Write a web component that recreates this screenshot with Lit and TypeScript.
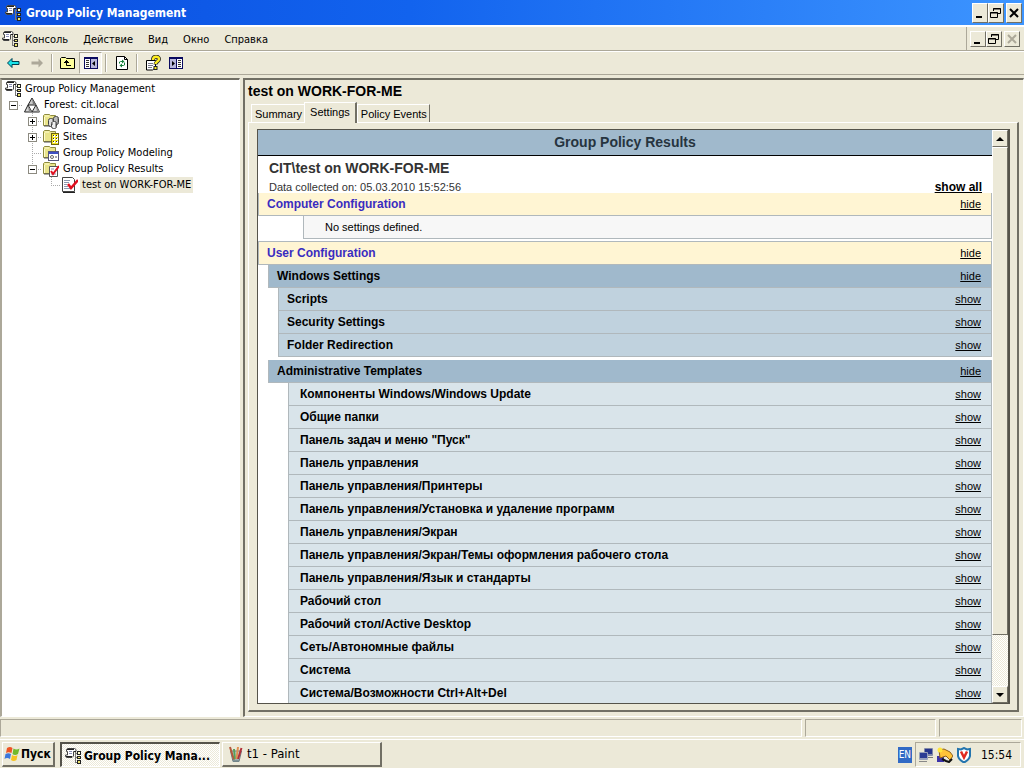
import { LitElement, html, svg, css, TemplateResult, SVGTemplateResult } from "lit";
import { customElement, state } from "lit/decorators.js";

const art: Record<string, SVGTemplateResult> = {
  console: svg`
    <path d="M2.500 .500h7l1.500 1v2H8.500v4.500l-1.500 1.500H1.500l-1-1V7h2V3.500h-1v-2z" fill="#fff" stroke="#444"/>
    <path d="M2 1.500h7M9 3.500h2M1 8.500h6" stroke="#222"/>
    <path d="M4 3.500h3M4 5.500h3" stroke="#8a90b8"/>
    <path d="M10.500 4v10.500M10 5.500h3M10 9.500h3M10 14.500h3" stroke="#777" fill="none"/>
    <rect x="12.500" y="3.500" width="3" height="3" fill="#ffffd0" stroke="#222"/>
    <rect x="12.500" y="8.500" width="3" height="2" fill="#f0e870" stroke="#222"/>
    <rect x="12.500" y="12.500" width="3" height="3" fill="#f0e870" stroke="#222"/>`,
  forest: svg`
    <path d="M8 1l4 7H4z" fill="#c8c8c8" stroke="#222"/><path d="M8 1l1 7h3z" fill="#777"/>
    <path d="M4 8l4 7H.500z" fill="#d4d4d4" stroke="#222"/><path d="M4 9l1 6h3z" fill="#888"/>
    <path d="M12 8l3.500 7H8z" fill="#d4d4d4" stroke="#222"/><path d="M12 9l1 6h3z" fill="#888"/>`,
  folder: svg`
    <path d="M.500 12.500v-10l1-1h5l1 1h5v10z" fill="#e9e48a" stroke="#8d8a3e"/>
    <path d="M2 3h4M1.500 4v8" stroke="#fffcd0"/><path d="M1 13h12" stroke="#555"/>`,
  domains: svg`
    <rect x="5.500" y="5.500" width="5" height="8" rx="2" fill="#ddd" stroke="#444"/>
    <rect x="10.500" y="3.500" width="5" height="8" rx="2" fill="#bbb" stroke="#444"/>
    <rect x="8.500" y="8.500" width="5" height="7" rx="2" fill="#eee" stroke="#444"/>
    <path d="M9.500 7v5M14.500 5v5M12.500 10v5" stroke="#999"/>`,
  sites: svg`
    <rect x="8.500" y="4.500" width="7" height="11" fill="#f2e41c" stroke="#6b6410"/>
    <path d="M10 7h2M13 7h2M10 10h2M13 10h2M10 13h2M13 13h2" stroke="#fff" stroke-width="2"/>
    <path d="M10.500 6v8M13.500 6v8" stroke="#333" stroke-dasharray="1 2"/>`,
  modeling: svg`
    <rect x="5.500" y="6.500" width="10" height="9" fill="#fff" stroke="#55557a"/>
    <rect x="6" y="7" width="9" height="2" fill="#3e50c4"/>
    <circle cx="9" cy="12" r="1.500" fill="none" stroke="#666"/><path d="M12 11h2v2h-2z" fill="#aaa"/>`,
  results: svg`
    <path d="M6.500 5.500h8v10h-8z" fill="#fff" stroke="#555"/>
    <path d="M8 8h3M8 13h5" stroke="#88a"/><path d="M8 10l2 3 6-8" fill="none" stroke="#e01020" stroke-width="2"/>`,
  report: svg`
    <path d="M.500 .500h10l2 2v12h-12z" fill="#fff" stroke="#444"/><path d="M1 15.500h12" stroke="#222"/>
    <path d="M2 3.500h6M2 5.500h5M2 7.500h3M2 9.500h4M2 11.500h7" stroke="#8c98b0"/>
    <path d="M6 7l3 4 7-8" fill="none" stroke="#e01020" stroke-width="2.500"/>`,
  back: svg`<path d="M1.500 8L6 3.500V6.500h7v3H6v3z" fill="#19e4ea" stroke="#003f50"/>`,
  forward: svg`<path d="M14 8L9.500 3.500V6.500h-7v3h7v3z" fill="#aca899"/>`,
  up: svg`
    <path d="M.500 13.500v-10l1-1h4l1 1h8v10z" fill="#ffff9c" stroke="#000"/>
    <path d="M4 7.500h5M5 6.500h3M6.500 5v5.500H11" fill="none" stroke="#000"/>`,
  treePane: svg`
    <rect x="1.500" y="2.500" width="13" height="11" fill="#fff" stroke="#0a0a60"/><path d="M1 3h14" stroke="#0a0a60" stroke-width="2"/>
    <rect x="8" y="4" width="6" height="9" fill="#b8b8da"/><path d="M7.500 4v9" stroke="#0a0a60"/>
    <path d="M3 5.500h3M3 7.500h3M3 9.500h3M3 11.500h3" stroke="#333"/><path d="M12 6v5L9 8.500z" fill="#000"/>`,
  actionPane: svg`
    <rect x="1.500" y="2.500" width="13" height="11" fill="#fff" stroke="#0a0a60"/><path d="M1 3h14" stroke="#0a0a60" stroke-width="2"/>
    <rect x="2" y="4" width="6" height="9" fill="#b8b8da"/><path d="M8.500 4v9" stroke="#0a0a60"/>
    <path d="M10 5.500h3M10 7.500h3M10 9.500h3M10 11.500h3" stroke="#333"/><path d="M4 6v5l3-2.500z" fill="#000"/>`,
  refresh: svg`
    <path d="M2.500 1.500h8l3 3v10h-11z" fill="#fff" stroke="#000"/><path d="M10.500 1.500v3h3" fill="none" stroke="#000"/>
    <path d="M5.500 8.500V7l1-.500h2M10.500 7.500V10l-1 .500H8" fill="none" stroke="#15803a"/>
    <path d="M8 4.500l2.500 2-2.500 2zM8 8.500l-2.500 2 2.500 2z" fill="#15803a"/>`,
  help: svg`
    <path d="M1.500 5.500h9v7l-3 2.500h-6z" fill="#fff" stroke="#000"/><path d="M3 8.500h5M3 10.500h5M3 12.500h4" stroke="#778"/>
    <path d="M8 5c0-4.500 6-4 6-1 0 2.500-3.500 2.500-3.500 5.500" fill="none" stroke="#222" stroke-width="4"/>
    <path d="M8 5c0-4.500 6-4 6-1 0 2.500-3.500 2.500-3.500 5" fill="none" stroke="#ffee20" stroke-width="2.500"/>
    <rect x="9" y="11.500" width="3" height="3" fill="#ffee20" stroke="#222"/>`,
  flag: svg`
    <path d="M3 2q3-2 5.500 0L7.500 7q-3-1.500-5.500 0z" fill="#ee5525"/><path d="M9.500 2.500q3 2 6 0L14 8q-3 2-5.500 0z" fill="#72b92b"/>
    <path d="M1.500 8q3-1.500 5.500 0L6 13q-3-2-5.500 0z" fill="#3c78dc"/><path d="M8 9q3 2 5.500 0l-1 5q-3 2-5.500 0z" fill="#f7c320"/>`,
  paint: svg`
    <path d="M2.500 5h11l-2.500 10.500H5z" fill="#c2d0d2" stroke="#68797f"/>
    <path d="M6 14L2 1" stroke="#b4583a" stroke-width="2"/><path d="M7 13L6 3" stroke="#58a058" stroke-width="2"/>
    <path d="M8.500 13l1.500-12" stroke="#e09050" stroke-width="2"/><path d="M10 13l3.500-11" stroke="#b02f38" stroke-width="2"/>
    <path d="M5 14.500h6" stroke="#7f9296" stroke-width="2"/>`,
  network: svg`
    <rect x="6" y="1" width="9" height="8" rx="1" fill="#8088a8"/><rect x="7" y="2" width="7" height="5" fill="#25348c"/>
    <path d="M9 10h6v1H9z" fill="#777"/>
    <rect x="1" y="5" width="9" height="8" rx="1" fill="#98a0bc"/><rect x="2" y="6" width="7" height="5" fill="#2c3c94"/><path d="M1 14h8v1H1z" fill="#888"/>`,
  agent: svg`
    <path d="M0 9h7v6H0z" fill="#3b32a8"/><path d="M2 3l5-1 6 3 3 4-3 4-4-4-6 2z" fill="#ffc338" stroke="#8e5f18"/>
    <path d="M5 12l4 2 3 1 3-3" fill="none" stroke="#111" stroke-width="2"/><circle cx="3" cy="3" r="2.500" fill="#ffe63c"/>`,
  shield: svg`
    <path d="M2 2l3 .500L8 1l3 1.500L14 2v7q-1 4-6 6.500Q3 13 2 9z" fill="#fff" stroke="#2475ae" stroke-width="2"/>
    <path d="M5 4.500l3 6 3-6" fill="none" stroke="#e02a20" stroke-width="2.500"/>`,
  minimize: svg`<path d="M4 11h6v2H4z"/>`,
  restore: svg`<path d="M5.500 6V3.500h7v5H10M5 4h8" fill="none" stroke="currentColor"/><path d="M2.500 7.500h7v5h-7zM2 8h8" fill="none" stroke="currentColor"/>`,
  close: svg`<path d="M4 4l8 8M12 4l-8 8" stroke="currentColor" stroke-width="2" fill="none"/>`,
  arrowUp: svg`<path d="M4 10h8L8 6z"/>`,
  arrowDown: svg`<path d="M4 6h8l-4 4z"/>`,
};

const icon = (...names: string[]): TemplateResult =>
  html`<svg class="icon" viewBox="0 0 16 16" aria-hidden="true">${names.map((n) => art[n])}</svg>`;

const menus = ["Консоль", "Действие", "Вид", "Окно", "Справка"];

interface Node { cells: string[]; icons: string[]; label: string; selected?: boolean }

const tree: Node[] = [
  { cells: [], icons: ["console"], label: "Group Policy Management" },
  { cells: ["minus root"], icons: ["forest"], label: "Forest: cit.local" },
  { cells: ["", "plus line"], icons: ["folder", "domains"], label: "Domains" },
  { cells: ["", "plus line"], icons: ["folder", "sites"], label: "Sites" },
  { cells: ["", "line"], icons: ["folder", "modeling"], label: "Group Policy Modeling" },
  { cells: ["", "minus end"], icons: ["folder", "results"], label: "Group Policy Results" },
  { cells: ["", "", "end"], icons: ["report"], label: "test on WORK-FOR-ME", selected: true },
];

const windowsSettings = ["Scripts", "Security Settings", "Folder Redirection"];

const templates = [
  "Компоненты Windows/Windows Update",
  "Общие папки",
  'Панель задач и меню "Пуск"',
  "Панель управления",
  "Панель управления/Принтеры",
  "Панель управления/Установка и удаление программ",
  "Панель управления/Экран",
  "Панель управления/Экран/Темы оформления рабочего стола",
  "Панель управления/Язык и стандарты",
  "Рабочий стол",
  "Рабочий стол/Active Desktop",
  "Сеть/Автономные файлы",
  "Система",
  "Система/Возможности Ctrl+Alt+Del",
];

@customElement("app-root")
export class AppRoot extends LitElement {
  @state() private tab = "Settings";

  static styles = css`
    * { box-sizing: border-box; }
    :host {
      display: flex; flex-direction: column; height: 100vh; overflow: hidden;
      background: #ece9d8; color: #000;
      font: 11px/16px "DejaVu Sans Condensed", "Noto Sans", sans-serif;
      white-space: nowrap;
    }
    button { font: inherit; color: inherit; background: none; border: 0; padding: 0; margin: 0; white-space: nowrap; }
    h1, h2, h3, h4, ul, p { margin: 0; padding: 0; font: inherit; list-style: none; }
    a { color: #000; }
    .icon { width: 16px; height: 16px; flex: none; display: block; fill: currentColor; }

    .titlebar { display: flex; align-items: center; height: 25px; padding: 0 2px 0 5px; gap: 5px;
      background: linear-gradient(90deg, #0a4fe0, #1263ee 40%, #3d95ff); color: #fff; }
    .titlebar h1 { flex: 1; font-weight: bold; font-size: 12px; }
    .winbtns { display: flex; color: #000; }
    .winbtn { width: 16px; height: 20px; display: flex; align-items: center; justify-content: center;
      background: #ece9d8; border: 1px solid; border-color: #fff #716f64 #716f64 #fff; overflow: hidden; }
    .winbtn:last-child { margin-left: 2px; }
    .small .winbtn { height: 16px; }
    .small .winbtn:last-child { color: #aca899; }

    .menubar { display: flex; align-items: center; height: 26px; padding-left: 2px;
      border-top: 2px solid #fff; border-bottom: 1px solid #aca899; }
    .menus { display: flex; flex: 1; gap: 15px; padding: 2px 0 0 7px; }
    .small { align-items: center; height: 23px; padding: 0 4px 0 3px; border-left: 1px solid #aca899; }
    .toolbar { display: flex; align-items: center; height: 24px; padding-left: 2px;
      border-top: 1px solid #fff; border-bottom: 1px solid #aca899; }
    .tool { display: flex; align-items: center; justify-content: center; width: 23px; height: 22px; }
    .pressed { background: #f6f4ec; border: 1px solid; border-color: #aca899 #fff #fff #aca899; }
    .sep { width: 2px; height: 18px; margin: 0 3px; border-left: 1px solid #aca899; border-right: 1px solid #fff; }

    .body { flex: 1; display: flex; gap: 3px; min-height: 0; padding-top: 3px; }
    .tree { width: 240px; flex: none; background: #fff; padding: 1px 0 0 3px;
      border: 1px solid; border-width: 2px 1px 1px 2px; border-color: #716f64 #fff #fff #aca899; }
    .node { display: flex; height: 16px; }
    .node .icon { margin-right: 2px; }
    .label { padding: 0 2px; line-height: 16px; }
    .picked { background: #ece9d8; }
    .cell { width: 19px; height: 16px; flex: none; display: flex; align-items: center; padding-left: 4px;
      background-repeat: no-repeat; }
    .line { background-image: repeating-linear-gradient(#aaa 0 1px, transparent 1px 2px), repeating-linear-gradient(90deg, #aaa 0 1px, transparent 1px 2px);
      background-size: 1px 16px, 10px 1px; background-position: 8px 0, 8px 8px; }
    .end { background-image: repeating-linear-gradient(#aaa 0 1px, transparent 1px 2px), repeating-linear-gradient(90deg, #aaa 0 1px, transparent 1px 2px);
      background-size: 1px 8px, 10px 1px; background-position: 8px 0, 8px 8px; }
    .root { background-image: repeating-linear-gradient(90deg, #aaa 0 1px, transparent 1px 2px);
      background-size: 10px 1px; background-position: 8px 8px; }
    .box { width: 9px; height: 9px; border: 1px solid #8c8a80;
      background: linear-gradient(#000, #000) center / 5px 1px no-repeat #fff; }
    .plus .box { background: linear-gradient(#000, #000) center / 5px 1px no-repeat, linear-gradient(#000, #000) center / 1px 5px no-repeat, #fff; }

    .detail { flex: 1; min-width: 0; display: flex; flex-direction: column; padding: 1px 4px 4px 3px;
      border: solid; border-width: 2px 1px 1px 2px; border-color: #716f64 #fff #fff #716f64;
      font-family: "Liberation Sans", sans-serif; }
    .detail h2 { font-size: 14px; font-weight: bold; line-height: 20px; padding-bottom: 1px; }
    .tabs { display: flex; align-items: flex-end; height: 20px; padding-left: 3px; }
    .tab { height: 18px; padding: 0 2px 0 3px; border: 1px solid; border-color: #fff #716f64 transparent #fff; border-bottom: 0; }
    .tab:first-child { border-right: 0; }
    .current { height: 21px; margin-bottom: -1px; padding: 0 5px 3px; background: #ece9d8; border-right-width: 2px; z-index: 1; }
    .page { flex: 1; min-height: 0; display: flex; padding: 6px 7px 6px 8px; border: 1px solid; border-width: 1px 2px 2px 1px;
      border-color: #fff #716f64 #716f64 #fff; }
    .view { flex: 1; min-width: 0; display: flex; border: 1px solid #55534a; border-right-width: 2px; }
    .report { flex: 1; min-width: 0; overflow: hidden; background: #fff; }
    .banner { height: 26px; line-height: 25px; text-align: center; font-size: 14px; font-weight: bold; color: #26343f;
      background: #a0b9cc; border-bottom: 1px solid #000; }
    .summary { display: grid; grid-template-columns: 1fr auto; padding: 4px 10px 0 11px; height: 37px; color: #333; }
    .summary h3 { font-size: 14px; font-weight: bold; line-height: 17px; grid-column: 1 / 3; }
    .summary p { line-height: 20px; }
    .summary a { font-weight: bold; font-size: 12px; line-height: 20px; }
    .row { display: flex; justify-content: space-between; align-items: center; height: 23px; padding: 0 10px 0 8px;
      border: 1px solid #b0b8bc; border-top: 0; }
    .row h4 { font-size: 12px; font-weight: bold; }
    .config { background: #fff5d3; color: #3a2cc0; }
    .empty { margin: 0 0 2px 45px; padding-left: 21px; background: #f7f7f7; }
    .user { height: 24px; border-top: 1px solid #b0b8bc; }
    .section { margin-left: 10px; background: #a0b9cc; }
    .sub { margin-left: 20px; background: #c0d2de; }
    .subs { padding-bottom: 3px; }
    .item { margin-left: 30px; padding-left: 11px; background: #d9e4ea; }

    .scroll { width: 16px; flex: none; display: flex; flex-direction: column;
      background: repeating-conic-gradient(#fff 0 25%, #ece9d8 0 50%) 0 0 / 2px 2px; }
    .scroll button, .thumb { background: #ece9d8; border: 1px solid; border-color: #fff #716f64 #716f64 #fff; overflow: hidden; }
    .scroll button { height: 17px; display: flex; align-items: center; justify-content: center; }
    .track { flex: 1; }
    .thumb { height: 90.5%; }

    .status { display: flex; gap: 3px; height: 22px; padding: 2px 2px 2px 0; }
    .status div { border: 1px solid; border-color: #aca899 #fff #fff #aca899; width: 131px; }
    .status .grow { flex: 1; }
    .status .last { width: 83px; }
    .taskbar { display: flex; height: 29px; padding: 2px 3px 1px 2px; border-top: 1px solid #fff; font-size: 12px; }
    .start, .task { display: flex; align-items: center; border: 1px solid; border-width: 1px 2px 2px 1px;
      border-color: #fff #716f64 #716f64 #fff; }
    .start { width: 53px; font-weight: bold; gap: 1px; padding-left: 1px; margin-right: 5px; }
    .task { width: 160px; gap: 3px; padding-left: 5px; margin-right: 2px; font-size: 13px; }
    .active { font-size: 12px; font-weight: bold; padding: 1px 3px 0 3px; border-width: 2px 1px 1px 2px; border-color: #55534a #fff #fff #55534a;
      background: repeating-conic-gradient(#fff 0 25%, #ece9d8 0 50%) 0 0 / 2px 2px; }
    .lang { margin: auto 3px auto auto; width: 14px; height: 16px; text-align: center; background: #316ac5; color: #fff; font-size: 10px; }
    .tray { display: flex; align-items: center; gap: 3px; padding: 0 8px 0 2px;
      border: 1px solid; border-color: #aca899 #fff #fff #aca899; }
    .tray time { margin-left: 6px; }
  `;

  private link(text: string) {
    return html`<a href="#">${text}</a>`;
  }

  private row(kind: string, text: string, action: string) {
    return html`<div class="row ${kind}"><h4>${text}</h4>${this.link(action)}</div>`;
  }

  private windowButtons(kind: string) {
    return html`<div class="winbtns ${kind}">
      ${[["minimize", "Свернуть"], ["restore", "Восстановить"], ["close", "Закрыть"]].map(
        ([name, label]) => html`<button class="winbtn" aria-label=${label}>${icon(name)}</button>`
      )}
    </div>`;
  }

  private tool(name: string, label: string, pressed = false) {
    return html`<button class="tool ${pressed ? "pressed" : ""}" aria-label=${label}>${icon(name)}</button>`;
  }

  render() {
    return html`
      <header class="titlebar">${icon("console")}<h1>Group Policy Management</h1>${this.windowButtons("")}</header>
      <nav class="menubar">
        ${icon("console")}
        <div class="menus">${menus.map((m) => html`<button>${m}</button>`)}</div>
        ${this.windowButtons("small")}
      </nav>
      <div class="toolbar">
        ${this.tool("back", "Назад")}${this.tool("forward", "Вперед")}
        <span class="sep"></span>
        ${this.tool("up", "Вверх")}${this.tool("treePane", "Дерево консоли", true)}
        <span class="sep"></span>
        ${this.tool("refresh", "Обновить")}
        <span class="sep"></span>
        ${this.tool("help", "Справка")}${this.tool("actionPane", "Панель действий")}
      </div>

      <main class="body">
        <ul class="tree">
          ${tree.map((n) => html`<li class="node">
            ${n.cells.map((c) => html`<span class="cell ${c}">${/plus|minus/.test(c) ? html`<span class="box"></span>` : ""}</span>`)}
            ${icon(...n.icons)}<span class="label ${n.selected ? "picked" : ""}">${n.label}</span>
          </li>`)}
        </ul>

        <section class="detail">
          <h2>test on WORK-FOR-ME</h2>
          <div class="tabs" role="tablist">
            ${["Summary", "Settings", "Policy Events"].map((t) => html`<button role="tab" aria-selected=${t === this.tab}
              class="tab ${t === this.tab ? "current" : ""}" @click=${() => (this.tab = t)}>${t}</button>`)}
          </div>
          <div class="page">
            <div class="view">
              <div class="report">
                <h3 class="banner">Group Policy Results</h3>
                <div class="summary">
                  <h3>CIT\\test on WORK-FOR-ME</h3>
                  <p>Data collected on: 05.03.2010 15:52:56</p>
                  ${this.link("show all")}
                </div>
                ${this.row("config", "Computer Configuration", "hide")}
                <div class="row empty">No settings defined.</div>
                ${this.row("config user", "User Configuration", "hide")}
                ${this.row("section", "Windows Settings", "hide")}
                <div class="subs">${windowsSettings.map((t) => this.row("sub", t, "show"))}</div>
                ${this.row("section", "Administrative Templates", "hide")}
                ${templates.map((t) => this.row("item", t, "show"))}
              </div>
              <div class="scroll">
                <button aria-label="Прокрутить вверх">${icon("arrowUp")}</button>
                <div class="track"><div class="thumb"></div></div>
                <button aria-label="Прокрутить вниз">${icon("arrowDown")}</button>
              </div>
            </div>
          </div>
        </section>
      </main>

      <div class="status"><div class="grow"></div><div></div><div class="last"></div></div>

      <footer class="taskbar">
        <button class="start">${icon("flag")}Пуск</button>
        <button class="task active">${icon("console")}<span>Group Policy Mana...</span></button>
        <button class="task">${icon("paint")}<span>t1 - Paint</span></button>
        <span class="lang">EN</span>
        <div class="tray">${icon("network")}${icon("agent")}${icon("shield")}<time>15:54</time></div>
      </footer>
    `;
  }
}
